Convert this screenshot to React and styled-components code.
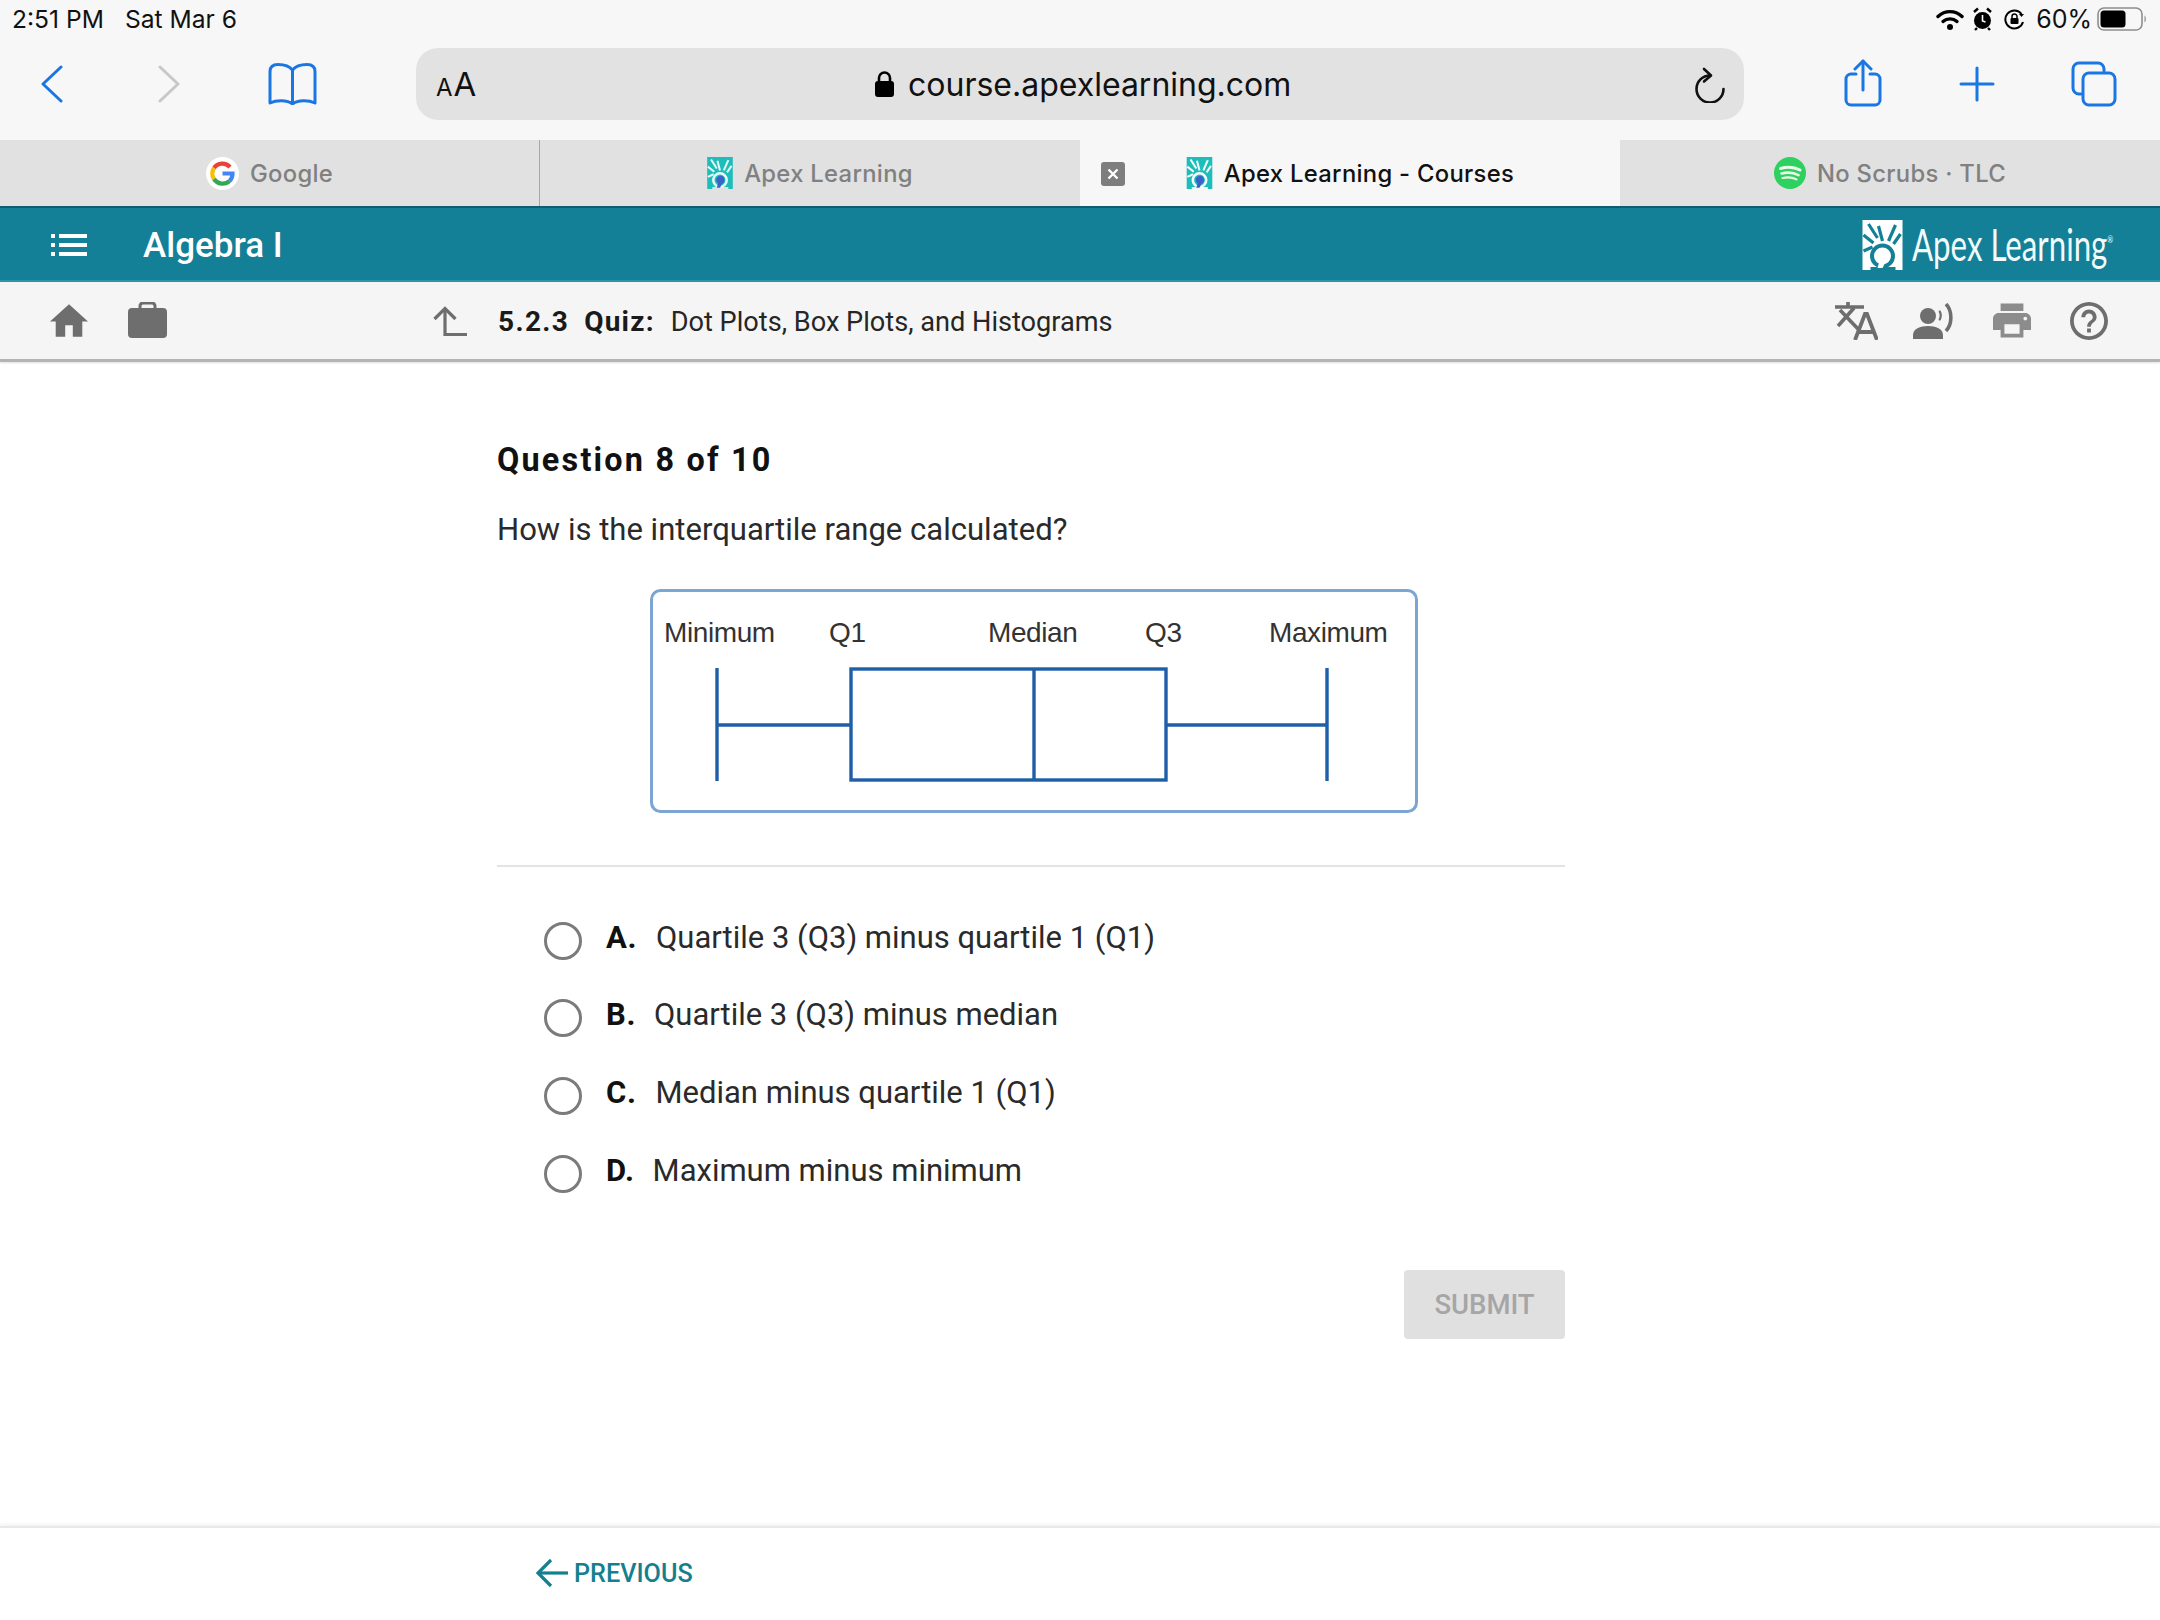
import React from "react";
import styled, { createGlobalStyle } from "styled-components";

const Global = createGlobalStyle`
  html, body { margin: 0; padding: 0; background: #fff; }
  body { width: 2160px; height: 1620px; overflow: hidden; font-family: Roboto, "Liberation Sans", sans-serif; }
`;
const Page = styled.div`width:2160px;height:1620px;display:flex;flex-direction:column;background:#fff;`;
const Chrome = styled.header`background:#f7f7f7;display:flex;flex-direction:column;`;
const StatusBar = styled.div`height:48px;padding:0 13px 10px 12px;box-sizing:border-box;display:flex;align-items:center;justify-content:space-between;font:400 24.6px Inter,sans-serif;color:#111;`;
const StatusLeft = styled.div`display:flex;gap:21px;`;
const StatusRight = styled.div`display:flex;align-items:center;`;
const Percent = styled.span`margin:0 5px 0 11px;font-size:25px;`;
const Icon = styled.svg`display:block;flex:none;width:${p=>p.$w}px;height:${p=>p.$h}px;margin-left:${p=>p.$ml||0}px;margin-top:${p=>p.$mt||0}px;`;
const Toolbar = styled.div`height:92px;display:flex;align-items:flex-start;`;
const ToolSlot = styled.div`flex:none;height:72px;display:flex;align-items:center;`;
const UrlBar = styled.div`margin-left:99px;width:1328px;height:72px;border-radius:22px;background:#e2e2e2;display:flex;align-items:center;position:relative;flex:none;`;
const TextSize = styled.span`margin-left:20px;color:#111;font:400 33px Inter,sans-serif;line-height:1;letter-spacing:1px;`;
const SmallA = styled.span`font-size:24px;`;
const UrlCenter = styled.div`position:absolute;left:459px;top:0;height:72px;display:flex;align-items:center;gap:14px;font:400 32px Inter,sans-serif;color:#111;`;
const Reload = styled.div`position:absolute;left:1278px;top:19px;`;
const ToolRight = styled.div`margin-left:100px;display:flex;align-items:center;height:72px;`;

const Tabs = styled.div`height:66px;display:grid;grid-template-columns:repeat(4,540px);`;
const Tab = styled.div`position:relative;display:flex;align-items:center;justify-content:center;gap:11px;box-sizing:border-box;
  background:${p=>p.$active?"#f7f7f7":"#e1e1e1"};color:${p=>p.$active?"#111":"#808080"};font:500 23.8px Inter,sans-serif;letter-spacing:.3px;
  border-right:${p=>p.$divider?"1px solid #a8a8a8":"none"};`;
const CloseBox = styled.div`position:absolute;left:21px;top:22px;width:24px;height:24px;border-radius:3px;background:#7e7e7e;display:flex;align-items:center;justify-content:center;`;

const Brand = styled.div`height:76px;box-sizing:border-box;padding-top:2px;background:#138097;border-top:2px solid #0e5e70;border-bottom:2px solid #2d96a8;display:flex;align-items:center;`;
const Course = styled.div`margin-left:56px;font:500 35px Roboto,sans-serif;color:#fff;flex:1;`;
const LogoWrap = styled.div`display:flex;align-items:center;gap:9px;width:251px;margin-right:47px;`;
const LogoText = styled.span`display:inline-block;font:400 44px Lato,sans-serif;color:#f2fbfb;white-space:nowrap;transform:scaleX(.71);transform-origin:0 50%;width:201px;margin-top:-2px;`;
const Reg = styled.span`font-size:10px;vertical-align:18px;`;

const SubBar = styled.div`height:80px;box-sizing:border-box;background:#f5f5f5;border-bottom:3px solid #b4b4b4;box-shadow:0 1px 2px rgba(0,0,0,.12);display:flex;align-items:center;`;
const Crumb = styled.div`margin:2px 0 0 31px;display:flex;align-items:baseline;flex:1;font:400 27.15px Roboto,sans-serif;color:#262626;`;
const CrumbNum = styled.span`font-size:28px;font-weight:700;letter-spacing:1.35px;color:#1a1a1a;`;
const CrumbQuiz = styled.span`font-size:28px;font-weight:700;letter-spacing:1.2px;color:#1a1a1a;margin:0 16px 0 15px;`;
const SubRight = styled.div`display:flex;align-items:center;margin-right:52px;`;

const Main = styled.main`flex:1;padding:78px 0 0 497px;box-sizing:border-box;`;
const Column = styled.div`width:1068px;display:flex;flex-direction:column;`;
const Heading = styled.h1`margin:0;font:700 32.4px/40px Roboto,sans-serif;letter-spacing:2.2px;color:#111;`;
const Prompt = styled.p`margin:30px 0 0;font:400 31.05px/40px Roboto,sans-serif;color:#2a2a2a;`;
const Figure = styled.svg`display:block;width:772px;height:228px;margin:38px 0 0 152px;`;
const Divider = styled.hr`margin:49px 0 0;border:0;height:2px;background:#e3e3e3;`;
const Options = styled.div`margin-top:31.5px;display:flex;flex-direction:column;`;
const Option = styled.label`height:77.6px;display:flex;align-items:center;padding-left:47px;font:400 31px Roboto,sans-serif;color:#2a2a2a;`;
const Radio = styled.span`flex:none;width:38px;height:38px;box-sizing:border-box;border:3.5px solid #7b7b7b;border-radius:50%;margin-right:24px;position:relative;top:3.5px;`;
const Letter = styled.b`font-weight:700;color:#111;margin-right:${p=>p.$gap}px;letter-spacing:.6px;`;
const Actions = styled.div`display:flex;justify-content:flex-end;margin-top:61px;`;
const Submit = styled.button`width:161px;height:69px;border:0;border-radius:4px;background:#e0e0e0;color:#a6a6a6;font:500 27.5px Roboto,sans-serif;padding:0;`;
const Footer = styled.footer`height:94px;box-sizing:border-box;border-top:2px solid #e8e8e8;box-shadow:0 -2px 3px rgba(0,0,0,.05);padding:0 0 2px 535px;display:flex;align-items:center;color:#14808f;font:500 25.2px Roboto,sans-serif;gap:6px;`;

const blue="#1a76e3";
const S=(p)=><g fill="none" stroke={p.c||blue} strokeWidth={p.w||3} strokeLinecap="round" strokeLinejoin="round">{p.children}</g>;

const ApexMark=({w,h,bg,ray,ball,ml})=>(
  <Icon $w={w} $h={h} $ml={ml} viewBox="0 0 40 50">
    <path d="M0 0H40V50H33V47H8V50H0Z" fill={bg}/>
    <g stroke={ray} strokeWidth="3.2" strokeLinecap="butt" fill="none">
      <path d="M6 4L15 18M16 6L20 21M33 5L26 21M38 14L31 24M1 15L11 23M1 31L10 27"/>
    </g>
    <circle cx="20" cy="36" r="10.5" fill="none" stroke={ray} strokeWidth="4"/>
    <path d="M14 36a6.5 6.5 0 1 1 9 6l-3 6h-5l2-7a6 6 0 0 1-3-5z" fill={ball}/>
  </Icon>
);

const GoogleIcon=()=>(
  <Icon $w={33} $h={33} viewBox="0 0 33 33">
    <circle cx="16.5" cy="16.5" r="16.5" fill="#fff"/>
    <g fill="none" strokeWidth="4.2">
      <path d="M24 10.2A10.2 10.2 0 0 0 8 11" stroke="#ea4335"/>
      <path d="M8 11a10.2 10.2 0 0 0 0 11" stroke="#fbbc05"/>
      <path d="M8 22a10.2 10.2 0 0 0 15.5 2" stroke="#34a853"/>
      <path d="M23.5 24a10 10 0 0 0 3-7.5H16.5" stroke="#4285f4"/>
    </g>
  </Icon>
);
const SpotifyIcon=()=>(
  <Icon $w={32} $h={32} viewBox="0 0 32 32">
    <circle cx="16" cy="16" r="16" fill="#2ed15f"/>
    <g fill="none" stroke="#e9fbe9" strokeLinecap="round">
      <path d="M6.5 11.5c7-2 14-1.5 19.5 1.5" strokeWidth="3"/>
      <path d="M7.5 16.5c6-1.6 12-1 17 1.6" strokeWidth="2.6"/>
      <path d="M8.5 21c5-1.2 10-.8 14 1.4" strokeWidth="2.2"/>
    </g>
  </Icon>
);

export default function App(){
  return (
    <Page>
      <Global/>
      <Chrome>
        <StatusBar>
          <StatusLeft><span>2:51 PM</span><span>Sat Mar 6</span></StatusLeft>
          <StatusRight>
            <Icon $w={28} $h={21} viewBox="0 0 28 21">
              <g fill="none" stroke="#000" strokeWidth="3.4" strokeLinecap="round"><path d="M2 7.5c7-6.5 17-6.5 24 0"/><path d="M7 12.5c4-3.5 10-3.5 14 0"/></g>
              <circle cx="14" cy="18" r="3" fill="#000"/>
            </Icon>
            <Icon $w={19} $h={24} $ml={9} viewBox="0 0 19 24">
              <circle cx="9.5" cy="13.5" r="8.5" fill="#000"/>
              <path d="M9.5 8v6l3 1" stroke="#fff" strokeWidth="1.6" fill="none"/>
              <path d="M1 5l4-3.5M18 5l-4-3.5M4 21l-2 2M15 21l2 2" stroke="#000" strokeWidth="2.4"/>
            </Icon>
            <Icon $w={21} $h={21} $ml={12} viewBox="0 0 21 21">
              <path d="M17.5 5a9 9 0 1 0 1.5 8" fill="none" stroke="#000" strokeWidth="2"/>
              <path d="M15 5h5l-2.5 3z" fill="#000"/>
              <rect x="6.5" y="9" width="8" height="6" rx="1" fill="#000"/>
              <path d="M8 9V7.5a2.5 2.5 0 0 1 5 0V9" fill="none" stroke="#000" strokeWidth="1.5"/>
            </Icon>
            <Percent>60%</Percent>
            <Icon $w={50} $h={24} viewBox="0 0 50 24">
              <rect x="1" y="1" width="44" height="22" rx="6" fill="none" stroke="#8e8e8e" strokeWidth="1.6"/>
              <rect x="3.5" y="3.5" width="25" height="17" rx="3.5" fill="#000"/>
              <path d="M47.5 8.5c1.8.8 1.8 6.2 0 7z" fill="#8e8e8e"/>
            </Icon>
          </StatusRight>
        </StatusBar>
        <Toolbar>
          <ToolSlot>
            <Icon $w={24} $h={38} $ml={40} viewBox="0 0 24 38"><S><path d="M21 2L3 19l18 17"/></S></Icon>
            <Icon $w={24} $h={38} $ml={93} viewBox="0 0 24 38"><S c="#c8c8c8"><path d="M3 2l18 17L3 36"/></S></Icon>
            <Icon $w={49} $h={42} $ml={87} viewBox="0 0 49 42"><S><path d="M24.5 7C21 2.500 16 1.500 10 1.500 5 1.500 2 4 2 8.500V40c6-3 17-3.500 22.500 1 5.500-4.500 16.500-4 22.500-1V8.500C47 4 44 1.500 39 1.500 33 1.500 28 2.500 24.500 7V41"/></S></Icon>
          </ToolSlot>
          <UrlBar>
            <TextSize><SmallA>A</SmallA>A</TextSize>
            <UrlCenter>
              <Icon $w={19} $h={26} viewBox="0 0 19 26">
                <rect x="0" y="10" width="19" height="16" rx="3" fill="#000"/>
                <path d="M4 11V7a5.500 5.500 0 0 1 11 0v4" fill="none" stroke="#000" strokeWidth="2.6"/>
              </Icon>
              <span>course.apexlearning.com</span>
            </UrlCenter>
            <Reload>
              <Icon $w={32} $h={36} viewBox="0 0 32 36">
                <S c="#111" w={2.6}><path d="M16 8.500A13.500 13.500 0 1 0 29.500 22"/><path d="M10 2l7 6.500-7 6"/></S>
              </Icon>
            </Reload>
          </UrlBar>
          <ToolRight>
            <Icon $w={38} $h={48} $mt={-2} viewBox="0 0 38 48"><S><path d="M12 15H7a5 5 0 0 0-5 5v21a5 5 0 0 0 5 5h24a5 5 0 0 0 5-5V20a5 5 0 0 0-5-5h-5"/><path d="M19 31V2"/><path d="M11 10l8-8 8 8"/></S></Icon>
            <Icon $w={36} $h={36} $ml={77} viewBox="0 0 36 36"><S><path d="M18 2v32M2 18h32"/></S></Icon>
            <Icon $w={46} $h={46} $ml={76} viewBox="0 0 46 46"><S><path d="M10 33H8a6 6 0 0 1-6-6V8a6 6 0 0 1 6-6h19a6 6 0 0 1 6 6v2"/><rect x="12" y="12" width="32" height="32" rx="6"/></S></Icon>
          </ToolRight>
        </Toolbar>
        <Tabs>
          <Tab $divider><GoogleIcon/><span>Google</span></Tab>
          <Tab><ApexMark w={26} h={32} bg="#1dbdbb" ray="#e6f7f7" ball="#3a62c8"/><span>Apex Learning</span></Tab>
          <Tab $active>
            <CloseBox><Icon $w={12} $h={12} viewBox="0 0 12 12"><path d="M1.500 1.500l9 9M10.500 1.500l-9 9" stroke="#fff" strokeWidth="2.400"/></Icon></CloseBox>
            <ApexMark w={27} h={32} bg="#1dbdbb" ray="#f4fbfb" ball="#3a62c8"/><span>Apex Learning - Courses</span>
          </Tab>
          <Tab><SpotifyIcon/><span>No Scrubs · TLC</span></Tab>
        </Tabs>
      </Chrome>

      <Brand>
        <Icon $w={36} $h={22} $ml={51} viewBox="0 0 36 22">
          <g fill="#fff"><rect x="0" y="0" width="4" height="4"/><rect x="0" y="9" width="4" height="4"/><rect x="0" y="18" width="4" height="4"/><rect x="8" y="0" width="28" height="4"/><rect x="8" y="9" width="28" height="4"/><rect x="8" y="18" width="28" height="4"/></g>
        </Icon>
        <Course>Algebra I</Course>
        <LogoWrap>
          <ApexMark w={41} h={50} bg="#fff" ray="#138097" ball="#fff"/>
          <LogoText>Apex Learning<Reg>®</Reg></LogoText>
        </LogoWrap>
      </Brand>

      <SubBar>
        <Icon $w={38} $h={33} $ml={50} viewBox="2 3 20 17"><path fill="#6e6e6e" d="M10 20v-6h4v6h5v-8h3L12 3 2 12h3v8z"/></Icon>
        <Icon $w={39} $h={36} $ml={40} $mt={-2} viewBox="0 0 39 36">
          <path d="M12 8V4a3 3 0 0 1 3-3h9a3 3 0 0 1 3 3v4" fill="none" stroke="#6e6e6e" strokeWidth="3"/>
          <rect x="0" y="6" width="39" height="30" rx="4" fill="#6e6e6e"/>
        </Icon>
        <Icon $w={34} $h={30} $ml={266} viewBox="0 0 34 30"><g fill="none" stroke="#6e6e6e" strokeWidth="3.2"><path d="M12 3v25.500h22"/><path d="M1.500 13L12 2.500 22.500 13"/></g></Icon>
        <Crumb>
          <CrumbNum>5.2.3</CrumbNum><CrumbQuiz>Quiz:</CrumbQuiz><span>Dot Plots, Box Plots, and Histograms</span>
        </Crumb>
        <SubRight>
          <Icon $w={43} $h={38} viewBox="0 0 43 38">
            <g fill="none" stroke="#6e6e6e" strokeWidth="3.6"><path d="M0 5h29M13 0v5M3 24L19 6M5 8l19 20"/></g>
            <g fill="none" stroke="#6e6e6e" strokeWidth="3.800"><path d="M20 38l10-26h2l10 26M23.500 30h15"/></g>
          </Icon>
          <Icon $w={42} $h={36} $ml={35} viewBox="0 0 42 36">
            <circle cx="15" cy="13" r="8" fill="#6e6e6e"/>
            <path d="M0 36v-4c0-6 7-9 15-9s15 3 15 9v4z" fill="#6e6e6e"/>
            <path d="M27 7c2.500 3 2.500 8 0 11l-1.500-1.500c1.500-2.500 1.500-5.500 0-8z" fill="#6e6e6e"/>
            <path d="M33 1c6.500 7 6.500 20 0 27" fill="none" stroke="#6e6e6e" strokeWidth="3.600"/>
          </Icon>
          <Icon $w={38} $h={35} $ml={38} viewBox="2 3 20 18"><path fill="#8c8c8c" d="M19 8H5c-1.660 0-3 1.340-3 3v6h4v4h12v-4h4v-6c0-1.660-1.340-3-3-3zm-3 11H8v-5h8v5zm3-7c-.55 0-1-.45-1-1s.45-1 1-1 1 .45 1 1-.45 1-1 1zm-1-9H6v4h12V3z"/></Icon>
          <Icon $w={38} $h={38} $ml={39} viewBox="2 2 20 20"><path fill="#6e6e6e" d="M11 18h2v-2h-2v2zm1-16C6.480 2 2 6.480 2 12s4.480 10 10 10 10-4.480 10-10S17.520 2 12 2zm0 18c-4.410 0-8-3.590-8-8s3.590-8 8-8 8 3.590 8 8-3.590 8-8 8zm0-14c-2.210 0-4 1.790-4 4h2c0-1.100.9-2 2-2s2 .9 2 2c0 2-3 1.750-3 5h2c0-2.250 3-2.500 3-5 0-2.210-1.790-4-4-4z"/></Icon>
        </SubRight>
      </SubBar>

      <Main>
        <Column>
          <Heading>Question 8 of 10</Heading>
          <Prompt>How is the interquartile range calculated?</Prompt>
          <Figure viewBox="649 589 772 228">
            <rect x="651.500" y="591.500" width="765" height="221" rx="9" fill="#fff" stroke="#7ba5d2" strokeWidth="3"/>
            <g fontFamily="Liberation Sans, sans-serif" fontSize="28" fill="#333" letterSpacing="-.4">
              <text x="664" y="643">Minimum</text>
              <text x="829" y="643">Q1</text>
              <text x="988" y="643">Median</text>
              <text x="1145" y="643">Q3</text>
              <text x="1269" y="643">Maximum</text>
            </g>
            <g fill="none" stroke="#1f5fa8" strokeWidth="3.4">
              <path d="M717 669V782M1327 669V782"/>
              <path d="M717 726H851M1166 726H1327"/>
              <rect x="851" y="670" width="315" height="111"/>
              <path d="M1034 670V781"/>
            </g>
          </Figure>
          <Divider/>
          <Options>
            <Option><Radio/><Letter $gap={19}>A.</Letter>Quartile 3 (Q3) minus quartile 1 (Q1)</Option>
            <Option><Radio/><Letter $gap={18}>B.</Letter>Quartile 3 (Q3) minus median</Option>
            <Option><Radio/><Letter $gap={19}>C.</Letter>Median minus quartile 1 (Q1)</Option>
            <Option><Radio/><Letter $gap={18}>D.</Letter>Maximum minus minimum</Option>
          </Options>
          <Actions><Submit>SUBMIT</Submit></Actions>
        </Column>
      </Main>

      <Footer>
        <Icon $w={33} $h={30} viewBox="0 0 33 30"><g fill="none" stroke="#14808f" strokeWidth="3.200"><path d="M33 15H3"/><path d="M16 2L3 15l13 13"/></g></Icon>
        <span>PREVIOUS</span>
      </Footer>
    </Page>
  );
}
